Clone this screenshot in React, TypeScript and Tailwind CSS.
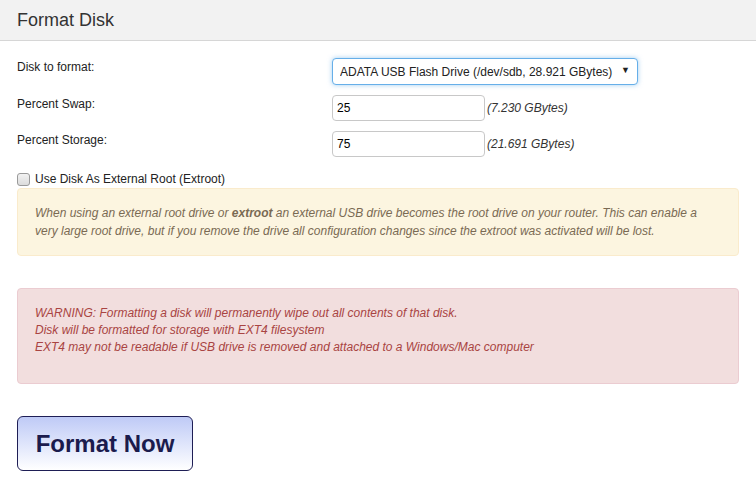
import { useState } from "react";

const font = { fontFamily: '"Liberation Sans", Arial, sans-serif' };

function FieldRow({ label, children }: { label: string; children: React.ReactNode }) {
  return (
    <div className="flex items-start">
      <label className="w-[315px] shrink-0 pt-[2px] text-[12px] leading-[14px] text-[#222]">{label}</label>
      {children}
    </div>
  );
}

function PercentInput({ value, size }: { value: string; size: string }) {
  return (
    <div className="flex items-center">
      <input
        defaultValue={value}
        className="h-[26px] w-[153px] rounded-[4px] border border-[#c8c8c8] px-[4px] text-[12px] text-black outline-none"
      />
      <span className="ml-[2px] text-[12px] italic text-[#333]">{size}</span>
    </div>
  );
}

export default function App() {
  const [extroot, setExtroot] = useState(false);

  return (
    <div className="h-[496px] w-[756px] overflow-hidden bg-white" style={font}>
      {/* header */}
      <div className="flex h-[41px] items-center border-b border-[#d6d6d6] bg-[#f2f2f2] px-[17px]">
        <h1 className="text-[18px] text-[#333]">Format Disk</h1>
      </div>

      <div className="px-[17px] pt-[17px]">
        <div className="flex flex-col gap-[10px]">
          <FieldRow label="Disk to format:">
            <div className="relative">
              <select className="h-[27px] w-[306px] appearance-none rounded-[4px] border border-[#66afe9] bg-white pl-[7px] text-[12px] text-[#222] shadow-[0_0_5px_rgba(102,175,233,0.6)] outline-none">
                <option>ADATA USB Flash Drive (/dev/sdb, 28.921 GBytes)</option>
              </select>
              <span className="pointer-events-none absolute right-[8px] top-[6px] text-[9px] text-[#222]">▼</span>
            </div>
          </FieldRow>
          <FieldRow label="Percent Swap:">
            <PercentInput value="25" size="(7.230 GBytes)" />
          </FieldRow>
          <FieldRow label="Percent Storage:">
            <PercentInput value="75" size="(21.691 GBytes)" />
          </FieldRow>
        </div>

        <label className="mt-[15px] flex h-[14px] items-center gap-[5px] text-[12px] text-[#222]">
          <input
            type="checkbox"
            checked={extroot}
            onChange={() => setExtroot(!extroot)}
            className="m-0 h-[13px] w-[13px] appearance-none rounded-[3px] border border-[#9a9a9a] bg-gradient-to-b from-[#f2f2f2] to-[#dcdcdc] checked:bg-[#5b9bd5]"
          />
          Use Disk As External Root (Extroot)
        </label>

        <div className="mt-[2px] rounded-[4px] border border-[#faebcc] bg-[#fcf5e0] px-[17px] py-[15px] text-[12px] italic leading-[18px] text-[#7a6a53]">
          When using an external root drive or <b>extroot</b> an external USB drive becomes the root drive on your router. This can enable a very large root drive, but if you remove the drive all configuration changes since the extroot was activated will be lost.
        </div>

        <div className="mt-[32px] rounded-[4px] border border-[#ebccd1] bg-[#f2dede] px-[17px] pb-[27px] pt-[16px] text-[12px] italic leading-[17px] text-[#a94442]">
          WARNING: Formatting a disk will permanently wipe out all contents of that disk.
          <br />
          Disk will be formatted for storage with EXT4 filesystem
          <br />
          EXT4 may not be readable if USB drive is removed and attached to a Windows/Mac computer
        </div>

        <button className="mt-[32px] h-[55px] w-[176px] rounded-[6px] border border-[#1e1e55] bg-gradient-to-b from-[#bfcaf6] to-white text-[24px] font-bold text-[#1b1b4d]">
          Format Now
        </button>
      </div>
    </div>
  );
}
